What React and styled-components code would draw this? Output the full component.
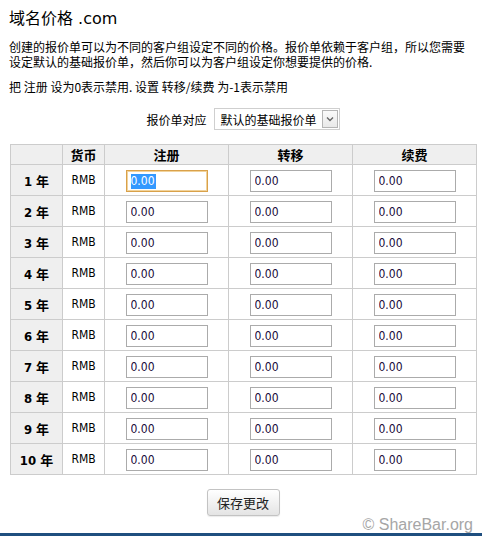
import React from "react";
import styled, { createGlobalStyle } from "styled-components";

const GlobalStyle = createGlobalStyle`
  html, body { margin: 0; padding: 0; background: #fff; }
  body {
    font-family: Tahoma, "DejaVu Sans Condensed", "DejaVu Sans", "Noto Sans CJK SC", sans-serif;
    color: #000;
  }
`;

const Page = styled.div`
  padding: 9px 6px 0 10px;
  width: 466px;
`;

const Title = styled.h1`
  margin: 0 0 0 -1px;
  font-size: 16px;
  line-height: 20px;
  font-weight: normal;
  font-family: "DejaVu Sans", "Noto Sans CJK SC", sans-serif;
`;

const Para = styled.p`
  margin: ${(p) => p.$top}px 0 0 -1px;
  font-size: 12px;
  line-height: 15px;
  font-family: "Noto Sans CJK SC", sans-serif;
`;

const SelectRow = styled.div`
  margin-top: 14px;
  display: flex;
  justify-content: center;
  align-items: center;
  gap: 7px;
  font-size: 12px;
  font-family: "Noto Sans CJK SC", sans-serif;
`;

const FakeSelect = styled.div`
  box-sizing: border-box;
  width: 126px;
  height: 22px;
  border: 1px solid #cfcfcf;
  display: flex;
  align-items: center;
  justify-content: space-between;
  padding: 0 1px 0 6px;
  font-size: 12px;
  background: #fff;
`;

const ArrowBox = styled.span`
  box-sizing: border-box;
  width: 16px;
  height: 18px;
  border: 1px solid #b5b5b5;
  background: linear-gradient(#fafafa, #e9e9e9);
  display: flex;
  align-items: center;
  justify-content: center;
`;

const Table = styled.table`
  margin-top: 14px;
  width: 466px;
  border-collapse: collapse;
  table-layout: fixed;
`;

const Th = styled.th`
  background: #efefef;
  border: 1px solid #cccccc;
  height: 18px;
  padding: 0;
  font-size: 13px;
  font-weight: bold;
  text-align: center;
  font-family: "Noto Sans CJK SC", sans-serif;
`;

const YearCell = styled.td`
  background: #efefef;
  border: 1px solid #cccccc;
  height: 30px;
  padding: 0;
  text-align: center;
  font-weight: bold;
  font-size: 13px;
`;

const YearUnit = styled.span`
  font-family: "Noto Sans CJK SC", sans-serif;
`;

const Cell = styled.td`
  border: 1px solid #cccccc;
  height: 30px;
  padding: 0;
  text-align: center;
  font-size: 12px;
`;

const PriceInput = styled.input`
  box-sizing: border-box;
  width: 82px;
  height: 22px;
  margin-top: 1px;
  border: 1px solid ${(p) => (p.$focused ? "#d9a14a" : "#ababab")};
  box-shadow: ${(p) => (p.$focused ? "inset 0 0 0 1px #f1d39c" : "none")};
  padding: 0 0 0 4px;
  font-family: Tahoma, "DejaVu Sans Condensed", "DejaVu Sans", sans-serif;
  font-size: 12px;
  color: ${(p) => (p.$focused ? "#fff" : "#1a0a3a")};
  background: ${(p) =>
    p.$focused
      ? "linear-gradient(#3399ff, #3399ff) no-repeat 4px 3px / 25px 15px, #fff"
      : "#fff"};
  outline: none;
  vertical-align: middle;
`;

const ButtonRow = styled.div`
  margin-top: 14px;
  display: flex;
  justify-content: center;
`;

const SaveButton = styled.button`
  box-sizing: border-box;
  width: 73px;
  height: 27px;
  border: 1px solid #c3c3c3;
  border-radius: 3px;
  background: linear-gradient(#ffffff, #e4e4e4);
  font-family: "Noto Sans CJK SC", sans-serif;
  font-size: 13px;
  color: #222;
  padding: 0;
  box-shadow: 0 1px 1px rgba(0, 0, 0, 0.08);
`;

const Watermark = styled.div`
  text-align: right;
  margin: 1px 3px 0 0;
  font-family: "Liberation Sans", Arial, sans-serif;
  font-size: 16px;
  line-height: 16px;
  color: #a6a6a6;
`;

const Bar = styled.div`
  height: 3px;
  background: #1f4f7f;
`;

const years = [1, 2, 3, 4, 5, 6, 7, 8, 9, 10];

export default function App() {
  return (
    <>
      <GlobalStyle />
      <Page>
        <Title>域名价格 .com</Title>
        <Para $top={10}>
          创建的报价单可以为不同的客户组设定不同的价格。报价单依赖于客户组，所以您需要设定默认的基础报价单，然后你可以为客户组设定你想要提供的价格.
        </Para>
        <Para $top={10}>把 注册 设为0表示禁用. 设置 转移/续费 为-1表示禁用</Para>
        <SelectRow>
          <span>报价单对应</span>
          <FakeSelect>
            <span>默认的基础报价单</span>
            <ArrowBox>
              <svg width="8" height="6" viewBox="0 0 8 6">
                <path d="M1 1.5 L4 4.5 L7 1.5" fill="none" stroke="#666" strokeWidth="1.4" />
              </svg>
            </ArrowBox>
          </FakeSelect>
        </SelectRow>
        <Table>
          <colgroup>
            <col style={{ width: 52 }} />
            <col style={{ width: 42 }} />
            <col style={{ width: 124 }} />
            <col style={{ width: 124 }} />
            <col style={{ width: 124 }} />
          </colgroup>
          <thead>
            <tr>
              <Th></Th>
              <Th>货币</Th>
              <Th>注册</Th>
              <Th>转移</Th>
              <Th>续费</Th>
            </tr>
          </thead>
          <tbody>
            {years.map((y) => (
              <tr key={y}>
                <YearCell>
                  {y} <YearUnit>年</YearUnit>
                </YearCell>
                <Cell>RMB</Cell>
                <Cell>
                  <PriceInput defaultValue="0.00" $focused={y === 1} />
                </Cell>
                <Cell>
                  <PriceInput defaultValue="0.00" />
                </Cell>
                <Cell>
                  <PriceInput defaultValue="0.00" />
                </Cell>
              </tr>
            ))}
          </tbody>
        </Table>
        <ButtonRow>
          <SaveButton>保存更改</SaveButton>
        </ButtonRow>
        <Watermark>© ShareBar.org</Watermark>
      </Page>
      <Bar />
    </>
  );
}
